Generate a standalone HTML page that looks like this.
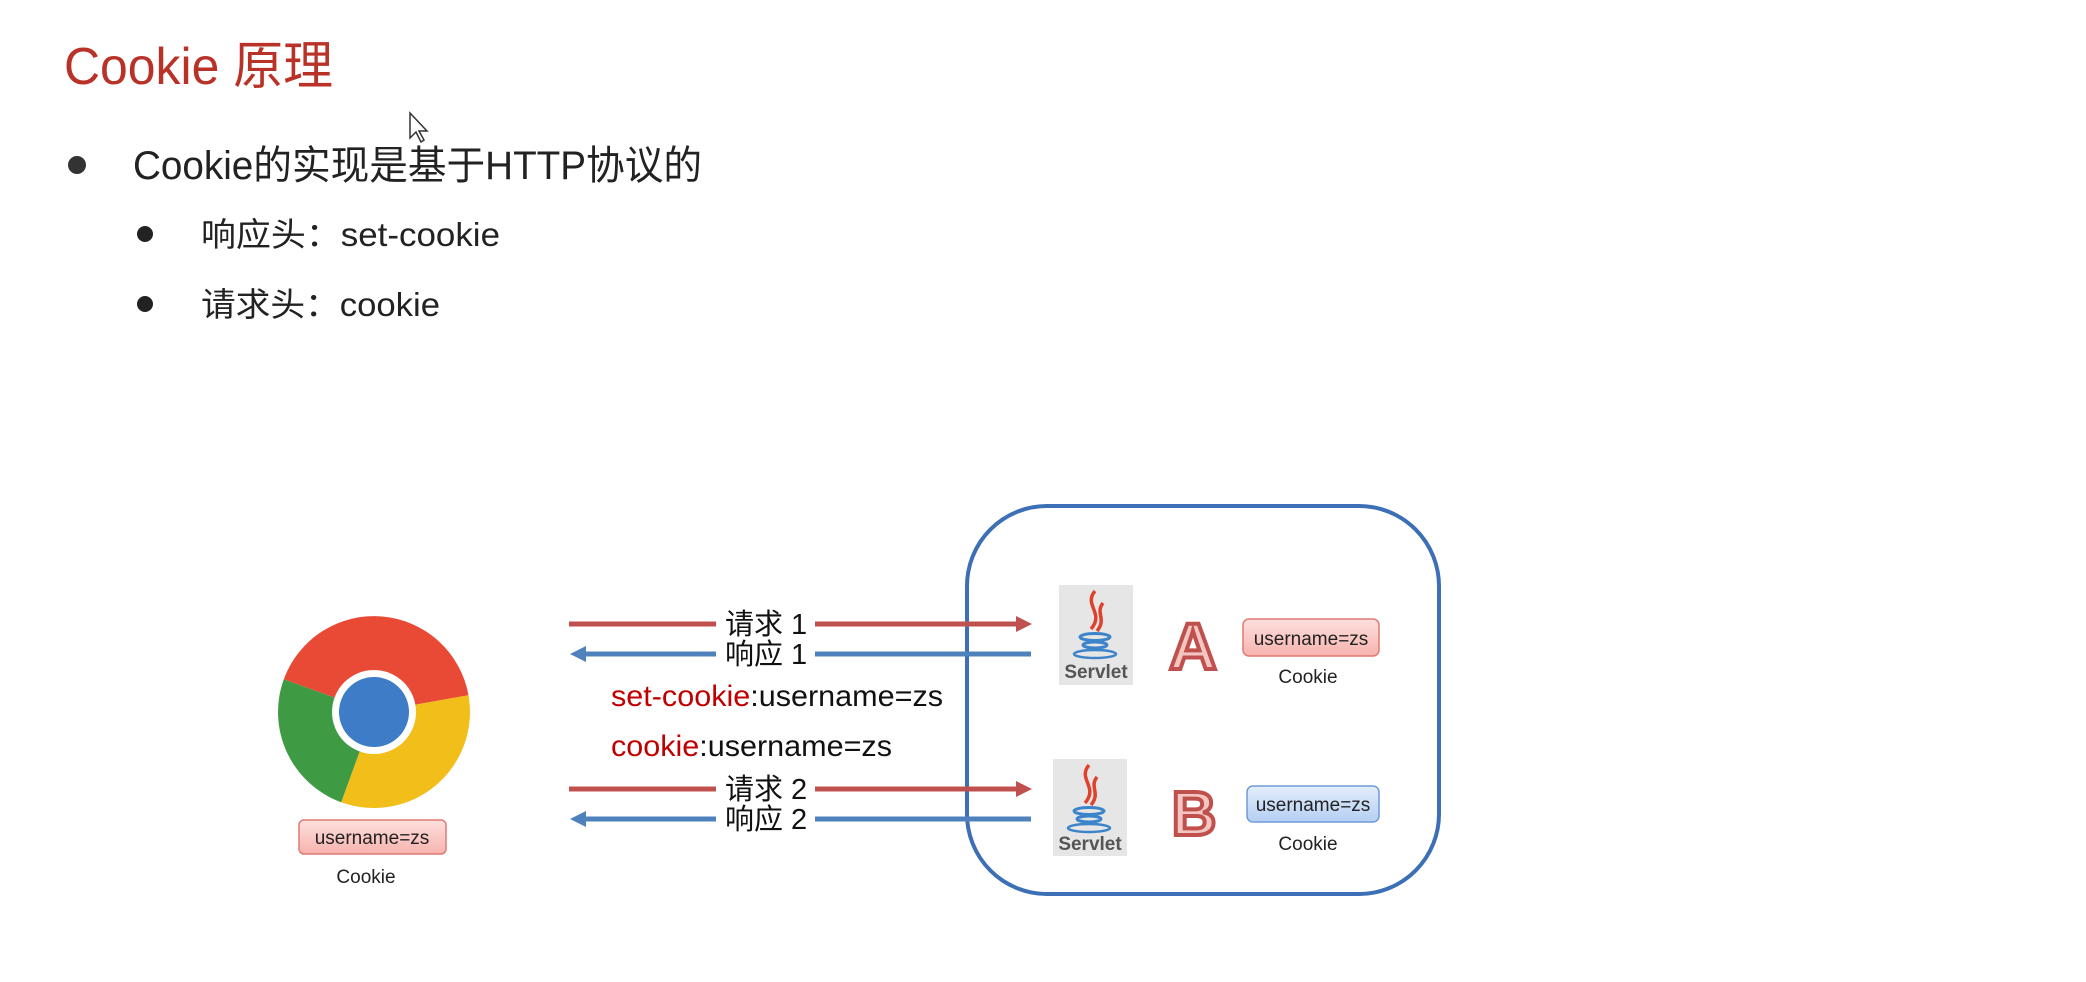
<!DOCTYPE html>
<html><head><meta charset="utf-8"><style>
html,body{margin:0;padding:0;background:#fff;width:2086px;height:982px;overflow:hidden}
svg{display:block}
text{font-family:"Liberation Sans","Noto Sans CJK SC",sans-serif}
</style></head><body>
<svg width="2086" height="982" viewBox="0 0 2086 982" xmlns="http://www.w3.org/2000/svg">
<defs>
<linearGradient id="pk" x1="0" y1="0" x2="0" y2="1"><stop offset="0" stop-color="#fde0de"/><stop offset="1" stop-color="#f7b3ae"/></linearGradient>
<linearGradient id="bl" x1="0" y1="0" x2="0" y2="1"><stop offset="0" stop-color="#e3eefc"/><stop offset="1" stop-color="#b5cff3"/></linearGradient>
</defs>
<text x="64" y="84" font-size="52" fill="#b83227" textLength="269" lengthAdjust="spacingAndGlyphs">Cookie 原理</text>
<circle cx="77" cy="165" r="9" fill="#333"/>
<text x="133" y="179" font-size="40" fill="#222" textLength="569" lengthAdjust="spacingAndGlyphs">Cookie的实现是基于HTTP协议的</text>
<circle cx="145" cy="234" r="8" fill="#222"/>
<text x="201" y="246" font-size="33" fill="#222" textLength="299" lengthAdjust="spacingAndGlyphs">响应头：set-cookie</text>
<circle cx="145" cy="304" r="8" fill="#222"/>
<text x="201" y="316" font-size="33" fill="#222" textLength="239" lengthAdjust="spacingAndGlyphs">请求头：cookie</text>
<path d="M410 113 L410 138 L416 132 L421 142 L424 140 L419 131 L427 131 Z" fill="#fff" stroke="#333" stroke-width="1.5"/>

<rect x="967" y="506" width="472" height="388" rx="80" fill="none" stroke="#3d6fb6" stroke-width="4"/>

<!-- chrome -->
<path d="M374 712 L283.8 679.2 A96 96 0 0 1 468.5 695.3 Z" fill="#e84a36"/>
<path d="M374 712 L468.5 695.3 A96 96 0 0 1 341.2 802.2 Z" fill="#f2be19"/>
<path d="M374 712 L341.2 802.2 A96 96 0 0 1 283.8 679.2 Z" fill="#3f9a44"/>
<circle cx="374" cy="712" r="42" fill="#fff"/>
<circle cx="374" cy="712" r="35" fill="#3f7cc8"/>
<rect x="299" y="820" width="147" height="34" rx="5" fill="url(#pk)" stroke="#e07a73" stroke-width="1.5"/>
<text x="372" y="844" font-size="19" fill="#222" text-anchor="middle">username=zs</text>
<text x="366" y="883" font-size="19" fill="#222" text-anchor="middle">Cookie</text>

<!-- arrows -->
<g stroke-width="5" fill="none">
<line x1="569" y1="624" x2="716" y2="624" stroke="#c0504d"/><line x1="815" y1="624" x2="1018" y2="624" stroke="#c0504d"/>
<line x1="584" y1="654" x2="716" y2="654" stroke="#4f81bd"/><line x1="815" y1="654" x2="1031" y2="654" stroke="#4f81bd"/>
<line x1="569" y1="789" x2="716" y2="789" stroke="#c0504d"/><line x1="815" y1="789" x2="1018" y2="789" stroke="#c0504d"/>
<line x1="584" y1="819" x2="716" y2="819" stroke="#4f81bd"/><line x1="815" y1="819" x2="1031" y2="819" stroke="#4f81bd"/>
</g>
<path d="M1016 616 L1032 624 L1016 632 Z" fill="#c0504d"/>
<path d="M1016 781 L1032 789 L1016 797 Z" fill="#c0504d"/>
<path d="M586 646 L570 654 L586 662 Z" fill="#4f81bd"/>
<path d="M586 811 L570 819 L586 827 Z" fill="#4f81bd"/>
<g font-size="29" fill="#111">
<text x="725" y="634">请求 1</text>
<text x="725" y="664">响应 1</text>
<text x="725" y="799">请求 2</text>
<text x="725" y="829">响应 2</text>
</g>
<text x="611" y="706" font-size="30" fill="#111" textLength="332" lengthAdjust="spacingAndGlyphs"><tspan fill="#c00000">set-cookie</tspan>:username=zs</text>
<text x="611" y="756" font-size="30" fill="#111" textLength="281" lengthAdjust="spacingAndGlyphs"><tspan fill="#c00000">cookie</tspan>:username=zs</text>

<!-- servlet A -->
<g transform="translate(1059,585)">
<rect width="74" height="100" fill="#e6e6e6"/>
<path d="M36 6 C24 20 46 28 32 44 M44 18 C36 28 48 34 38 46" stroke="#e0412c" stroke-width="3.5" fill="none"/>
<ellipse cx="36" cy="52" rx="15" ry="3.5" fill="none" stroke="#3b84c9" stroke-width="3"/>
<ellipse cx="36" cy="60" rx="12" ry="3" fill="none" stroke="#3b84c9" stroke-width="3"/>
<ellipse cx="36" cy="69" rx="21" ry="4" fill="none" stroke="#3b84c9" stroke-width="2.5"/>
<text x="37" y="93" font-size="19" font-weight="bold" fill="#555" text-anchor="middle">Servlet</text>
</g>
<g transform="translate(1053,759)">
<rect width="74" height="97" fill="#e6e6e6"/>
<path d="M36 6 C24 20 46 28 32 44 M44 18 C36 28 48 34 38 46" stroke="#e0412c" stroke-width="3.5" fill="none"/>
<ellipse cx="36" cy="52" rx="15" ry="3.5" fill="none" stroke="#3b84c9" stroke-width="3"/>
<ellipse cx="36" cy="60" rx="12" ry="3" fill="none" stroke="#3b84c9" stroke-width="3"/>
<ellipse cx="36" cy="69" rx="21" ry="4" fill="none" stroke="#3b84c9" stroke-width="2.5"/>
<text x="37" y="91" font-size="19" font-weight="bold" fill="#555" text-anchor="middle">Servlet</text>
</g>
<text x="1193" y="669" font-size="66" font-weight="bold" fill="#f4c6c2" stroke="#c0504d" stroke-width="4" text-anchor="middle">A</text>
<text x="1194" y="835" font-size="62" font-weight="bold" fill="#f4c6c2" stroke="#c0504d" stroke-width="4" text-anchor="middle">B</text>

<rect x="1243" y="619" width="136" height="37" rx="6" fill="url(#pk)" stroke="#e07a73" stroke-width="1.5"/>
<text x="1311" y="645" font-size="19" fill="#222" text-anchor="middle">username=zs</text>
<text x="1308" y="683" font-size="19" fill="#222" text-anchor="middle">Cookie</text>
<rect x="1247" y="786" width="132" height="36" rx="6" fill="url(#bl)" stroke="#6f9bd6" stroke-width="1.5"/>
<text x="1313" y="811" font-size="19" fill="#222" text-anchor="middle">username=zs</text>
<text x="1308" y="850" font-size="19" fill="#222" text-anchor="middle">Cookie</text>
</svg>
</body></html>
